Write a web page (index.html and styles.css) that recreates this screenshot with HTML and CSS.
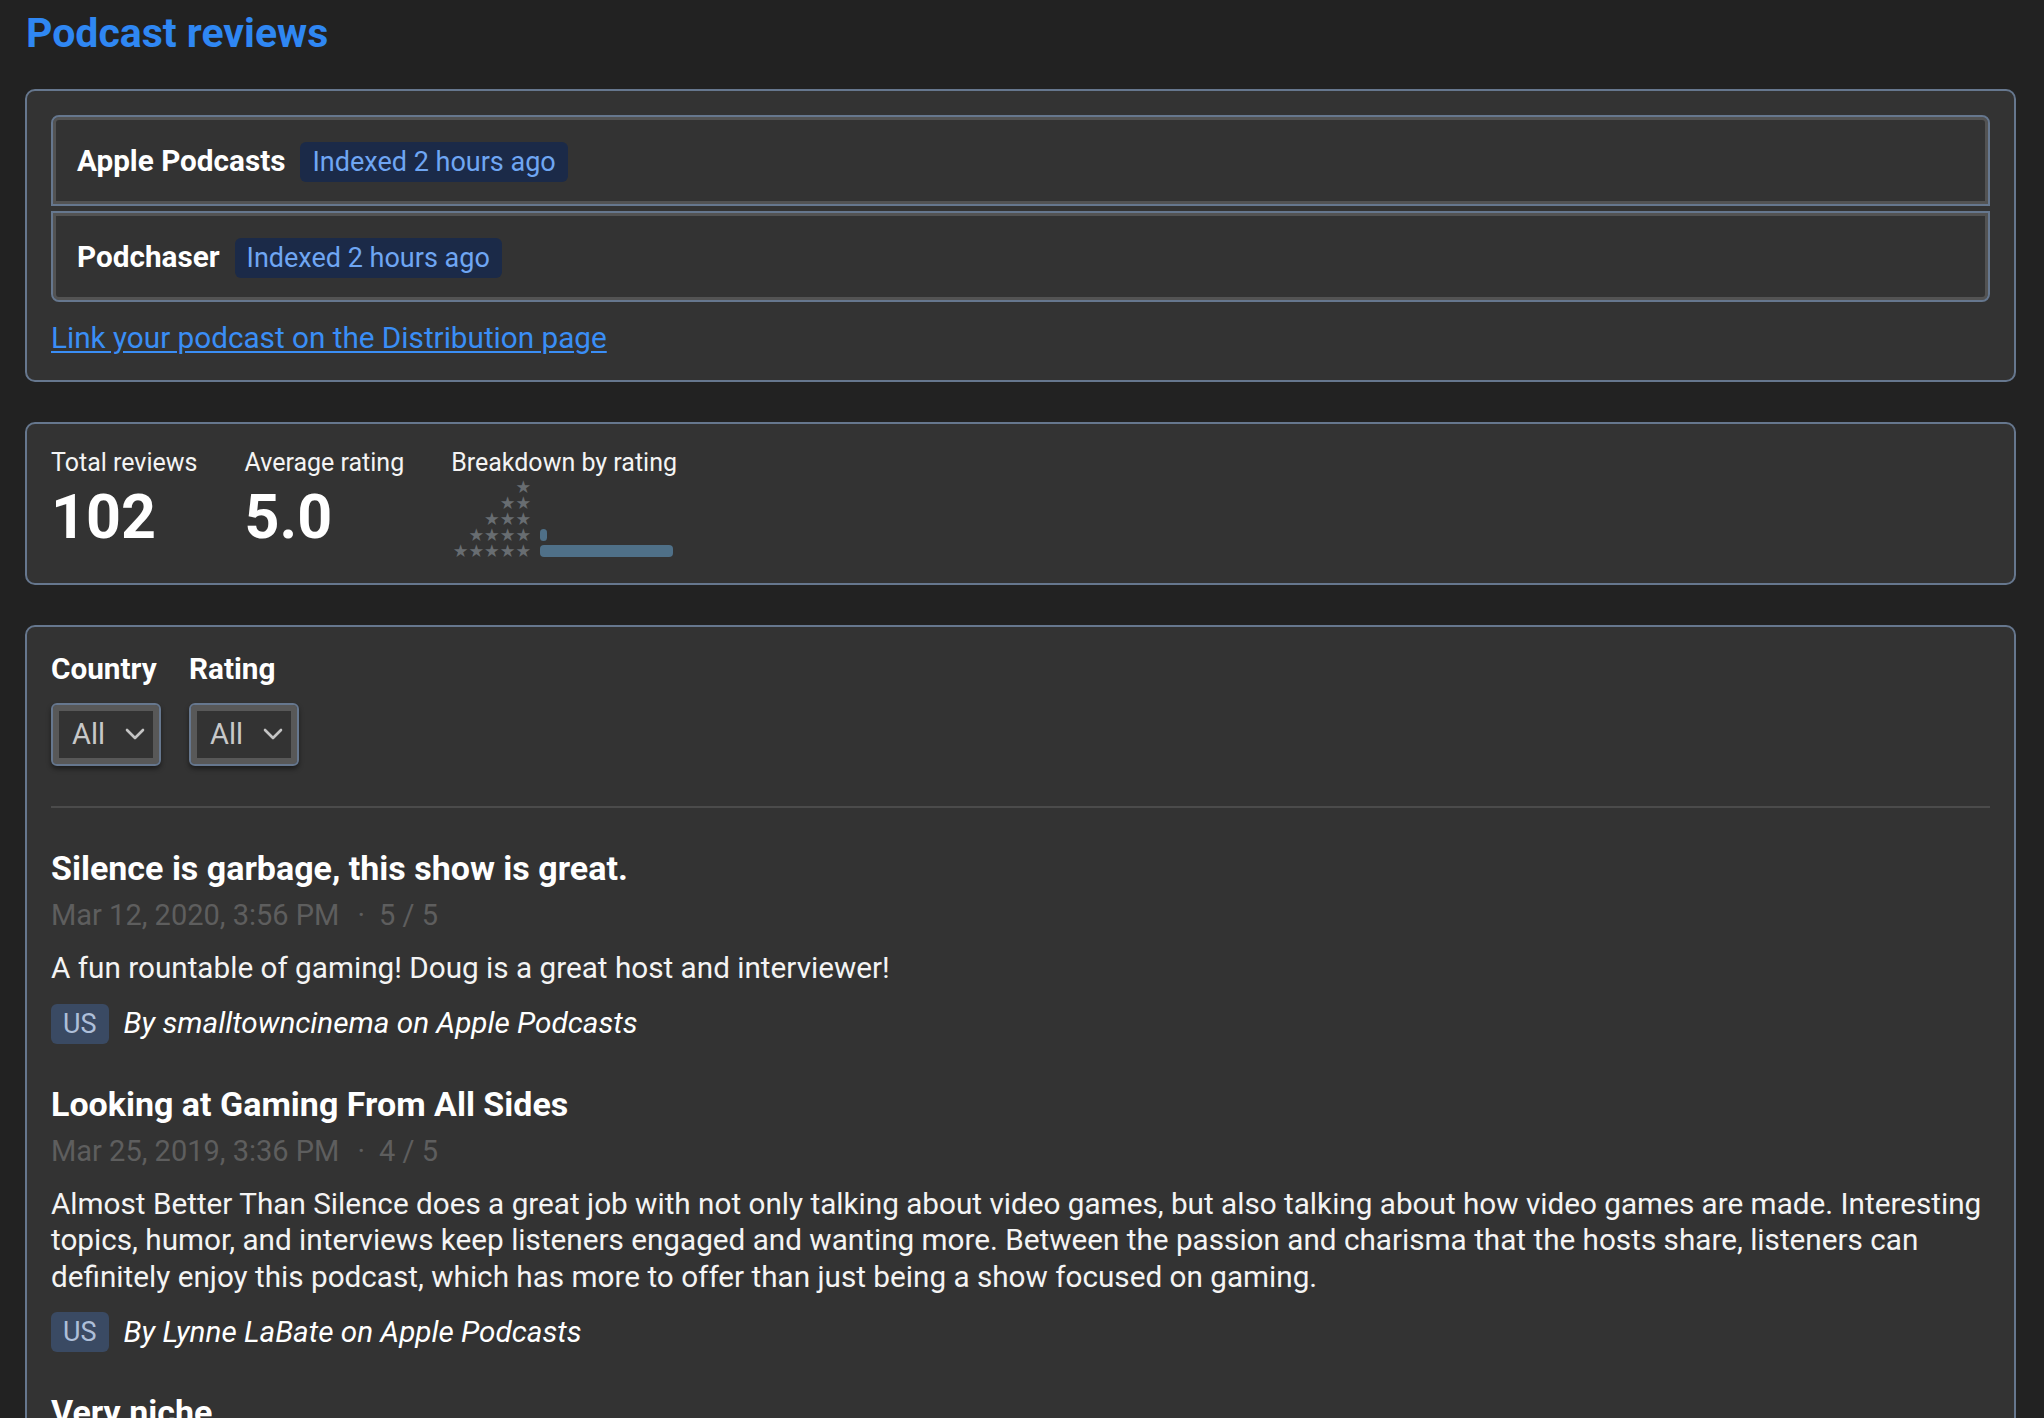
FILE: index.html
```html
<!DOCTYPE html>
<html lang="en">
<head>
<meta charset="utf-8">
<title>Podcast reviews</title>
<link rel="stylesheet" href="styles.css">
</head>
<body class="page">
  <h1 class="page-title">Podcast reviews</h1>

  <section class="card sources">
    <div class="source-list">
      <div class="source-row">
        <span class="source-name">Apple Podcasts</span>
        <span class="index-badge">Indexed 2 hours ago</span>
      </div>
      <div class="source-row">
        <span class="source-name">Podchaser</span>
        <span class="index-badge">Indexed 2 hours ago</span>
      </div>
    </div>
    <a class="dist-link" href="#">Link your podcast on the Distribution page</a>
  </section>

  <section class="card stats">
    <div class="stat">
      <div class="stat-label">Total reviews</div>
      <div class="stat-value">102</div>
    </div>
    <div class="stat">
      <div class="stat-label">Average rating</div>
      <div class="stat-value">5.0</div>
    </div>
    <div class="stat breakdown">
      <div class="stat-label">Breakdown by rating</div>
      <div class="breakdown-grid">
        <span class="stars">★</span><span class="bar-track"></span>
        <span class="stars">★★</span><span class="bar-track"></span>
        <span class="stars">★★★</span><span class="bar-track"></span>
        <span class="stars">★★★★</span><span class="bar-track"><span class="bar" style="width:7px"></span></span>
        <span class="stars">★★★★★</span><span class="bar-track"><span class="bar" style="width:97%"></span></span>
      </div>
    </div>
  </section>

  <section class="card reviews">
    <div class="filters">
      <div class="filter">
        <span class="filter-label">Country</span>
        <span class="select">All
          <svg class="chevron" viewBox="0 0 20 12" width="20" height="12"><path d="M2 2 L10 10 L18 2" fill="none" stroke="#c4c4c4" stroke-width="2.6" stroke-linecap="round" stroke-linejoin="round"/></svg>
        </span>
      </div>
      <div class="filter">
        <span class="filter-label">Rating</span>
        <span class="select">All
          <svg class="chevron" viewBox="0 0 20 12" width="20" height="12"><path d="M2 2 L10 10 L18 2" fill="none" stroke="#c4c4c4" stroke-width="2.6" stroke-linecap="round" stroke-linejoin="round"/></svg>
        </span>
      </div>
    </div>

    <hr class="divider">

    <article class="review">
      <h2 class="review-title">Silence is garbage, this show is great.</h2>
      <div class="review-meta"><span>Mar 12, 2020, 3:56 PM</span><span class="dot">·</span><span>5 / 5</span></div>
      <p class="review-body">A fun rountable of gaming! Doug is a great host and interviewer!</p>
      <div class="review-footer">
        <span class="country-badge">US</span>
        <span class="review-author">By smalltowncinema on Apple Podcasts</span>
      </div>
    </article>

    <article class="review">
      <h2 class="review-title">Looking at Gaming From All Sides</h2>
      <div class="review-meta"><span>Mar 25, 2019, 3:36 PM</span><span class="dot">·</span><span>4 / 5</span></div>
      <p class="review-body">Almost Better Than Silence does a great job with not only talking about video games, but also talking about how video games are made. Interesting topics, humor, and interviews keep listeners engaged and wanting more. Between the passion and charisma that the hosts share, listeners can definitely enjoy this podcast, which has more to offer than just being a show focused on gaming.</p>
      <div class="review-footer">
        <span class="country-badge">US</span>
        <span class="review-author">By Lynne LaBate on Apple Podcasts</span>
      </div>
    </article>

    <article class="review">
      <h2 class="review-title">Very niche...</h2>
      <div class="review-meta"><span>Feb 3, 2019, 9:12 AM</span><span class="dot">·</span><span>5 / 5</span></div>
      <p class="review-body">A show about games for people who care about how they get made.</p>
      <div class="review-footer">
        <span class="country-badge">US</span>
        <span class="review-author">By a listener on Apple Podcasts</span>
      </div>
    </article>
  </section>
</body>
</html>
```

FILE: styles.css
```css
html, body {
  background: #222222;
}

.page {
  margin: 0;
  padding: 9px 28px 40px 25px;
  color: #f4f4f4;
  font-family: Roboto, "Liberation Sans", sans-serif;
  font-size: 29.7px;
  line-height: 36.4px;
}

.page-title {
  margin: 0 0 32px 1px;
  font-size: 41px;
  line-height: 48px;
  font-weight: 700;
  color: #2f87f3;
}

.card {
  background: #333333;
  border: 2px solid #66778e;
  border-radius: 10px;
  padding: 24px;
  margin-bottom: 40px;
}

/* Sources */
.source-list {
  display: flex;
  flex-direction: column;
  gap: 5px;
}

.source-row {
  display: flex;
  align-items: center;
  gap: 15px;
  height: 91px;
  box-sizing: border-box;
  padding: 2px 24px 0;
  border: 2px solid #66778e;
  box-shadow: inset 0 0 0 3px #535353;
}

.source-row:first-child {
  border-radius: 8px 8px 0 0;
}

.source-row:last-child {
  border-radius: 0 0 8px 8px;
}

.source-name {
  font-weight: 700;
  color: #ffffff;
}

.index-badge {
  display: inline-block;
  height: 40px;
  line-height: 40px;
  padding: 0 12px;
  border-radius: 6px;
  background: #1b2a48;
  color: #6fa6f3;
  font-size: 27px;
}

.dist-link {
  display: inline-block;
  margin-top: 18px;
  color: #3a8ef6;
  text-decoration: underline;
  text-underline-offset: 3px;
}

/* Stats */
.stats {
  display: flex;
  gap: 47px;
}

.stat-label {
  font-size: 25px;
  line-height: 30px;
  color: #f4f4f4;
}

.stat-value {
  margin-top: 8px;
  font-size: 61px;
  line-height: 62px;
  font-weight: 700;
  color: #ffffff;
}

.breakdown-grid {
  display: grid;
  grid-template-columns: 80px 1fr;
  grid-auto-rows: 16px;
  column-gap: 9px;
  margin-top: 1px;
}

.stars {
  justify-self: end;
  font-family: "DejaVu Sans", sans-serif;
  font-size: 17.5px;
  line-height: 16px;
  color: #686d71;
  white-space: nowrap;
}

.bar-track {
  display: flex;
  align-items: center;
}

.bar {
  display: block;
  height: 12px;
  border-radius: 4px;
  background: #4f7088;
}

/* Reviews */
.filters {
  display: flex;
  gap: 28px;
}

.filter {
  display: flex;
  flex-direction: column;
  align-items: flex-start;
  gap: 15px;
}

.filter-label {
  font-weight: 700;
  color: #ffffff;
}

.select {
  display: inline-flex;
  align-items: center;
  gap: 20px;
  height: 63px;
  box-sizing: border-box;
  padding: 0 14px 0 19px;
  border: 2px solid #66778e;
  border-radius: 6px;
  background: #333333;
  color: #c8c8c8;
  font-size: 29px;
  box-shadow: inset 0 0 0 6px #585858, 0 3px 5px rgba(0, 0, 0, 0.45);
}

.chevron {
  display: block;
}

.divider {
  margin: 40px 0 40px;
  border: 0;
  height: 2px;
  background: #4b4b4b;
}

.review {
  margin-bottom: 40px;
}

.review-title {
  margin: 0;
  font-size: 34px;
  line-height: 40px;
  font-weight: 700;
  color: #ffffff;
}

.review-meta {
  margin-top: 9px;
  color: #5e5e5e;
  font-size: 29px;
  display: flex;
}

.review-meta .dot {
  margin: 0 14px 0 18px;
}

.review-body {
  margin: 17px 0 0;
  color: #f4f4f4;
}

.review-footer {
  margin-top: 17px;
  display: flex;
  align-items: center;
  gap: 15px;
}

.country-badge {
  display: inline-block;
  height: 40px;
  line-height: 40px;
  padding: 0 12px;
  border-radius: 6px;
  background: #3a4a63;
  color: #aebfd9;
  font-size: 27px;
}

.review-author {
  font-style: italic;
  color: #ffffff;
}
```
